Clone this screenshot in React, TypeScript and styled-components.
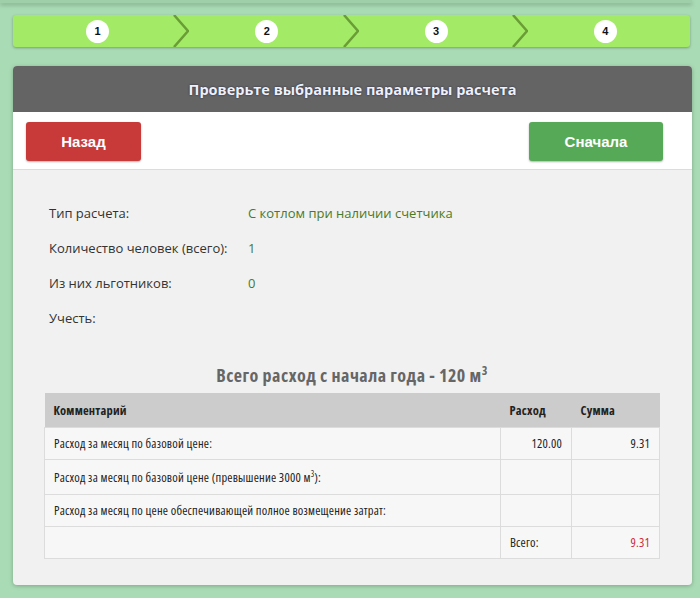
import { FC } from "react";
import styled, { createGlobalStyle } from "styled-components";

const GlobalStyle = createGlobalStyle`
  body {
    margin: 0;
    background: #a9dcb5;
    font-family: "Open Sans", "Liberation Sans", sans-serif;
  }
`;

const Page = styled("div")`
  padding: 0 8px 14px 13px;
`;

const TopEdge = styled("div")`
  height: 3px;
  margin: 0 8px 12px 0;
  background: #9fcfa9;
  box-shadow: 0 2px 4px rgba(0, 0, 0, 0.25);
`;

const Steps = styled("div")`
  display: flex;
  height: 32px;
  margin-right: 2px;
  background: #a3ea66;
  border-radius: 3px;
  box-shadow: 0 1px 3px rgba(0, 0, 0, 0.3);
  overflow: hidden;
`;

const Step = styled("div")`
  position: relative;
  flex: 1;
  display: flex;
  align-items: center;
  justify-content: center;
`;

const StepNumber = styled("span")`
  display: flex;
  align-items: center;
  justify-content: center;
  width: 23px;
  height: 23px;
  border-radius: 50%;
  background: #fff;
  font-family: "Liberation Sans", sans-serif;
  font-size: 11px;
  font-weight: bold;
  color: #111;
`;

const Chevron = styled("svg")`
  position: absolute;
  top: 0;
  right: -7px;
`;

const Panel = styled("div")`
  margin-top: 19px;
  background: #f1f1f1;
  border-radius: 4px;
  box-shadow: 0 1px 4px rgba(0, 0, 0, 0.25);
  overflow: hidden;
`;

const PanelHeader = styled("div")`
  height: 46px;
  display: flex;
  align-items: center;
  justify-content: center;
  background: #646464;
  font-size: 14.5px;
  font-weight: bold;
  color: #eef0fa;
  text-shadow: 0 0 2px #1c2040;
`;

const ButtonBar = styled("div")`
  display: flex;
  justify-content: space-between;
  padding: 10px 29px 8px 13px;
  background: #fff;
  border-bottom: 1px solid #dcdcdc;
`;

const Button = styled("button")<{ $color: string; $width: number }>`
  width: ${(p) => p.$width}px;
  height: 39px;
  border: none;
  border-radius: 3px;
  background: ${(p) => p.$color};
  box-shadow: 0 1px 2px rgba(0, 0, 0, 0.3);
  font-family: "Liberation Sans", Arial, sans-serif;
  font-size: 15px;
  font-weight: bold;
  color: #fff;
`;

const Content = styled("div")`
  padding: 25px 32px 26px 31px;
`;

const InfoRow = styled("div")`
  display: flex;
  height: 35px;
  align-items: center;
  padding-left: 5px;
  font-size: 13px;
  color: #333;
`;

const InfoLabel = styled("span")`
  width: 199px;
`;

const InfoValue = styled("span")`
  color: #4a7a26;
`;

const Total = styled("div")`
  margin-top: 28px;
  height: 24px;
  text-align: center;
  font-family: "Open Sans", sans-serif;
  font-stretch: 75%;
  font-size: 18px;
  letter-spacing: 0.5px;
  font-weight: bold;
  color: #666;

  sup {
    font-size: 12px;
    line-height: 0;
  }
`;

const Table = styled("table")`
  width: 100%;
  margin-top: 6px;
  border-collapse: collapse;
  font-family: "Open Sans", sans-serif;
  font-stretch: 75%;
  font-size: 12.5px;
  letter-spacing: 0.2px;
  color: #222;
`;

const Th = styled("th")`
  height: 34px;
  padding: 0 9px;
  background: #cccccc;
  text-align: left;
  font-weight: bold;
`;

const Td = styled("td")<{ $align?: string; $red?: boolean }>`
  height: 31px;
  padding: 0 9px;
  background: #f7f7f7;
  border: 1px solid #dcdcdc;
  text-align: ${(p) => p.$align || "left"};
  color: ${(p) => (p.$red ? "#d3283c" : "#222")};

  sup {
    font-size: 8px;
    line-height: 0;
  }
`;

const ChevronIcon: FC = () => (
  <Chevron width="16" height="32" viewBox="0 0 16 32">
    <polyline points="1,0 15,16 1,32" fill="none" stroke="#6a9d36" strokeWidth="2.5" />
  </Chevron>
);

const info = [
  ["Тип расчета:", "С котлом при наличии счетчика"],
  ["Количество человек (всего):", "1"],
  ["Из них льготников:", "0"],
  ["Учесть:", ""],
];

export default function App() {
  return (
    <>
      <GlobalStyle />
      <TopEdge />
      <Page>
        <Steps>
          {[1, 2, 3, 4].map((n) => (
            <Step key={n}>
              <StepNumber>{n}</StepNumber>
              {n < 4 && <ChevronIcon />}
            </Step>
          ))}
        </Steps>
        <Panel>
          <PanelHeader>Проверьте выбранные параметры расчета</PanelHeader>
          <ButtonBar>
            <Button $color="#c8393a" $width={115}>Назад</Button>
            <Button $color="#56a957" $width={134}>Сначала</Button>
          </ButtonBar>
          <Content>
            {info.map(([label, value]) => (
              <InfoRow key={label}>
                <InfoLabel>{label}</InfoLabel>
                <InfoValue>{value}</InfoValue>
              </InfoRow>
            ))}
            <Total>
              Всего расход с начала года - 120 м<sup>3</sup>
            </Total>
            <Table>
              <thead>
                <tr>
                  <Th>Комментарий</Th>
                  <Th style={{ width: 53 }}>Расход</Th>
                  <Th style={{ width: 70 }}>Сумма</Th>
                </tr>
              </thead>
              <tbody>
                <tr>
                  <Td>Расход за месяц по базовой цене:</Td>
                  <Td $align="right">120.00</Td>
                  <Td $align="right">9.31</Td>
                </tr>
                <tr>
                  <Td style={{ height: 34 }}>
                    Расход за месяц по базовой цене (превышение 3000 м<sup>3</sup>):
                  </Td>
                  <Td />
                  <Td />
                </tr>
                <tr>
                  <Td>Расход за месяц по цене обеспечивающей полное возмещение затрат:</Td>
                  <Td />
                  <Td />
                </tr>
                <tr>
                  <Td />
                  <Td>Всего:</Td>
                  <Td $align="right" $red>
                    9.31
                  </Td>
                </tr>
              </tbody>
            </Table>
          </Content>
        </Panel>
      </Page>
    </>
  );
}
